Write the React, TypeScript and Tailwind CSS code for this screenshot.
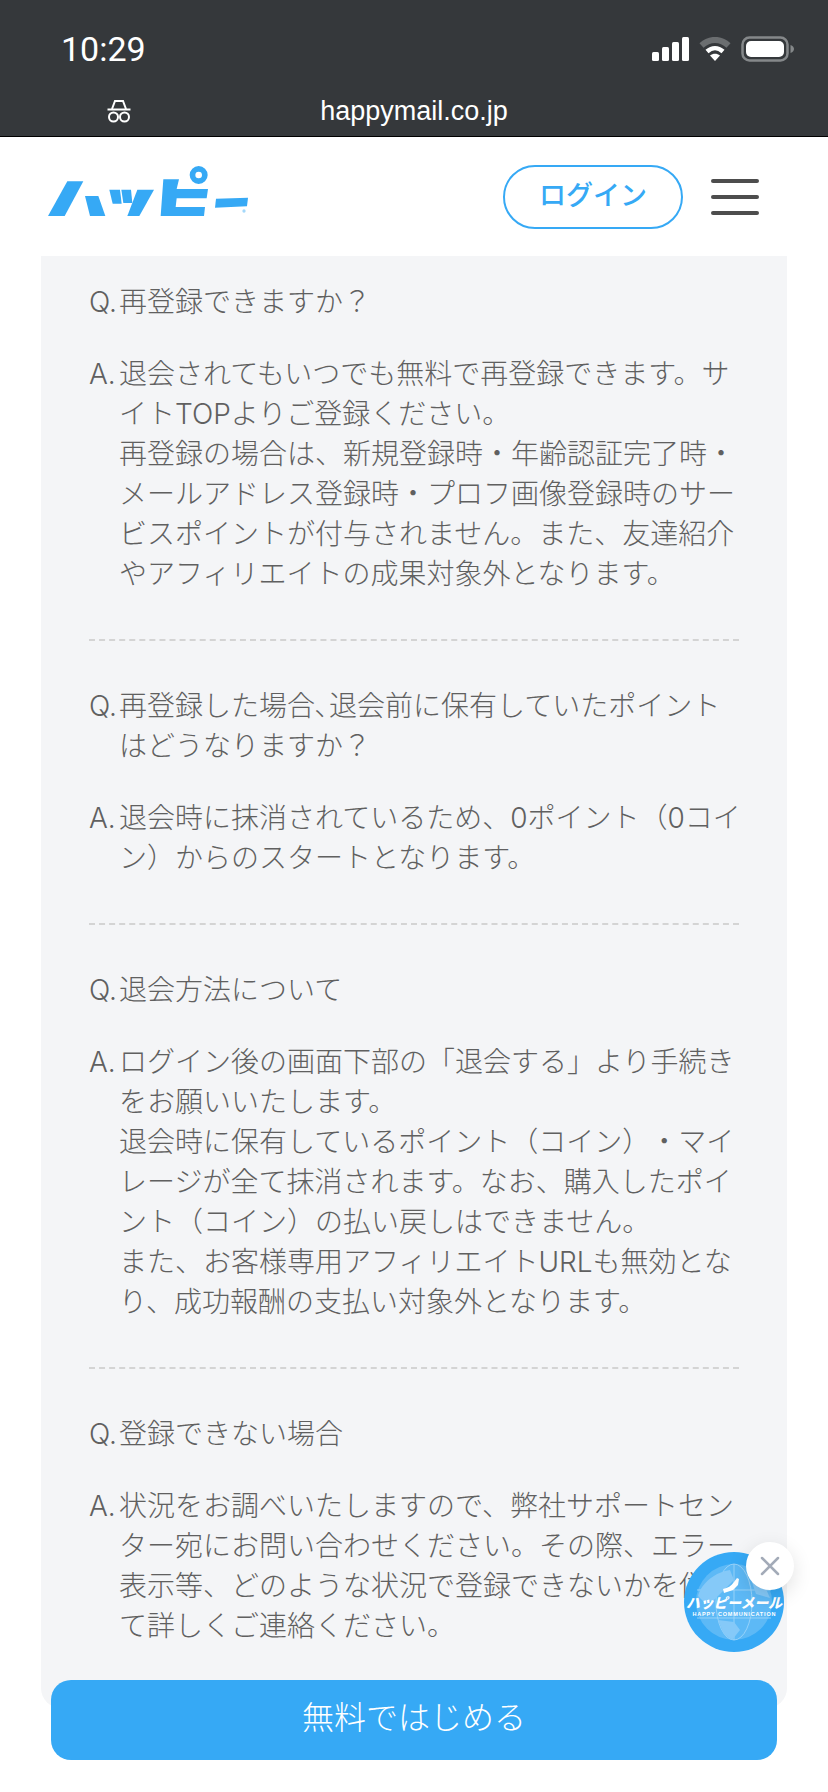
const sans = "font-['Liberation_Sans','Noto_Sans_CJK_JP',sans-serif]";

const faqs = [
  {
    q: ["再登録できますか？"],
    a: [
      "退会されてもいつでも無料で再登録できます。サイトTOPよりご登録ください。",
      "再登録の場合は、新規登録時・年齢認証完了時・メールアドレス登録時・プロフ画像登録時のサービスポイントが付与されません。また、友達紹介やアフィリエイトの成果対象外となります。",
    ],
  },
  {
    q: ["再登録した場合､退会前に保有していたポイントはどうなりますか？"],
    a: ["退会時に抹消されているため、0ポイント（0コイン）からのスタートとなります。"],
  },
  {
    q: ["退会方法について"],
    a: [
      "ログイン後の画面下部の「退会する」より手続きをお願いいたします。",
      "退会時に保有しているポイント（コイン）・マイレージが全て抹消されます。なお、購入したポイント（コイン）の払い戻しはできません。",
      "また、お客様専用アフィリエイトURLも無効となり、成功報酬の支払い対象外となります。",
    ],
  },
  {
    q: ["登録できない場合"],
    a: ["状況をお調べいたしますので、弊社サポートセンター宛にお問い合わせください。その際、エラー表示等、どのような状況で登録できないかを併せて詳しくご連絡ください。"],
  },
];

function Logo() {
  return (
    <svg width="200" height="60" viewBox="0 -12 600 180" fill="#36a9f5">
      <path d="M0 141 58 37h48L50 141z" />
      <path d="M111 81h40l21 60h-46z" />
      <path d="M184 62h32l5 42h-27z" />
      <path d="M220 62h29l4 40h-27z" />
      <path d="M268 62h50l-44 79h-36z" />
      <path d="M346 31h47l-7 29h94l-4 28h-90l-3 26h88l-3 27H338z" />
      <path fillRule="evenodd" d="M452-9a27 27 0 1 1 0 54 27 27 0 0 1 0-54zm0 17a10 10 0 1 0 0 20 10 10 0 0 0 0-20z" />
      <path d="M504 89l96-3-3 26-96 4z" />
      <circle cx="588" cy="126" r="5" opacity="0.45" />
    </svg>
  );
}

function Signal() {
  return (
    <svg width="37" height="24" viewBox="0 0 37 24" fill="#fff">
      <rect x="0" y="15" width="7" height="9" rx="1.5" />
      <rect x="10" y="10" width="7" height="14" rx="1.5" />
      <rect x="20" y="5" width="7" height="19" rx="1.5" />
      <rect x="30" y="0" width="7" height="24" rx="1.5" />
    </svg>
  );
}

function Wifi() {
  return (
    <svg width="32" height="24" viewBox="0 0 32 24" fill="none">
      <path d="M2.500 8.500c8-7.500 19-7.500 27 0" stroke="#6b6e70" strokeWidth="6" />
      <path d="M8 14.500c5-4.500 11-4.500 16 0" stroke="#fff" strokeWidth="4.500" />
      <path d="M16 24l-5-5.500c3-2.500 7-2.500 10 0z" fill="#fff" />
    </svg>
  );
}

function Battery() {
  return (
    <svg width="54" height="26" viewBox="0 0 54 26" fill="none">
      <rect x="1.500" y="1.500" width="45" height="23" rx="7" stroke="#85888a" strokeWidth="2.500" />
      <rect x="5" y="5" width="38" height="16" rx="5" fill="#fff" />
      <path d="M49.500 9c2.500 1 3.500 2.500 3.500 4s-1 3-3.500 4z" fill="#85888a" />
    </svg>
  );
}

function Incognito() {
  return (
    <svg width="24" height="24" viewBox="0 0 24 24" fill="none" stroke="#fff" strokeWidth="2">
      <path d="M5 10 8 2h8l3 8" />
      <path d="M0.500 10.500h23" />
      <circle cx="6.500" cy="18" r="4.500" />
      <circle cx="17.500" cy="18" r="4.500" />
    </svg>
  );
}

function Globe() {
  return (
    <svg width="100" height="100" viewBox="0 0 100 100">
      <circle cx="50" cy="50" r="50" fill="#36a9f5" />
      <circle cx="50" cy="50" r="38" fill="#5db9f6" />
      <g fill="none" stroke="#a5d8fa" strokeWidth="0.800">
        <ellipse cx="50" cy="50" rx="18" ry="38" />
        <path d="M50 12v76M13 38h74M13 66h74" />
      </g>
      <path d="M14 44c4-14 18-24 32-26l4 10-12 12-8 8-10 2zM34 68l16 2 6 8-8 10-8-6zM66 20l12 8 8 18-14-4-4-12z" fill="#85c9f8" />
      <path d="M39 37c5-1 8-3 11-7l3-4 2 1-1 6-5 5-9 3z" fill="#fff" />
      <text x="50" y="56" textAnchor="middle" fill="#fff" fontSize="14" fontWeight="900" fontStyle="italic" fontFamily="'Noto Sans CJK JP', sans-serif" textLength="96" lengthAdjust="spacingAndGlyphs">ハッピーメール</text>
      <text x="50" y="64" textAnchor="middle" fill="#fff" fontSize="5.500" fontWeight="700" fontFamily="'Liberation Sans', sans-serif" textLength="83" lengthAdjust="spacing">HAPPY COMMUNICATION</text>
    </svg>
  );
}

export default function App() {
  return (
    <div className={`relative flex h-[1792px] flex-col overflow-hidden bg-white ${sans}`}>
      <div className="h-[137px] shrink-0 border-b border-black bg-[#35383b] text-white">
        <div className="flex h-[98px] items-center justify-between pr-[33px] pl-[61px]">
          <span className="font-['Roboto'] text-[34px] font-normal">10:29</span>
          <div className="flex items-center gap-[10px]">
            <Signal />
            <Wifi />
            <Battery />
          </div>
        </div>
        <div className="relative flex items-center justify-center text-[27px] leading-[26px]">
          <span className="absolute left-[107px]">
            <Incognito />
          </span>
          happymail.co.jp
        </div>
      </div>

      <header className="flex h-[119px] shrink-0 items-center justify-between pr-[69px] pl-[48px]">
        <div className="-mt-[4px]">
          <Logo />
        </div>
        <div className="flex items-center gap-[28px]">
          <div className="flex h-[64px] w-[180px] items-center justify-center rounded-full border-2 border-[#36a9f5] text-[27px] font-medium text-[#36a9f5]">
            ログイン
          </div>
          <div className="flex w-[48px] flex-col gap-[12px]">
            <span className="h-[4px] rounded-full bg-[#4d4d4d]" />
            <span className="h-[4px] rounded-full bg-[#4d4d4d]" />
            <span className="h-[4px] rounded-full bg-[#4d4d4d]" />
          </div>
        </div>
      </header>

      <main className="mx-[41px] rounded-b-[20px] bg-[#f4f5f7] px-[48px] pt-[26px] pb-[62px] font-['Inter','Noto_Sans_CJK_JP',sans-serif] text-[28px] leading-[40px] font-light text-[#606060] [text-spacing-trim:space-all]">
        {faqs.map((item, i) => (
          <section key={i} className={i > 0 ? "mt-[45px] border-t-2 border-dashed border-[#d4d4d4] pt-[45px]" : ""}>
            <div className="flex">
              <span className="w-[30px] shrink-0">Q.</span>
              <p>{item.q}</p>
            </div>
            <div className="mt-[32px] flex">
              <span className="w-[30px] shrink-0">A.</span>
              <div className="-mr-[4px] min-w-0 flex-1">
                {item.a.map((line, j) => (
                  <p key={j}>{line}</p>
                ))}
              </div>
            </div>
          </section>
        ))}
      </main>

      <div className="absolute top-[1552px] left-[684px] h-[100px] w-[100px]">
        <Globe />
        <div className="absolute -top-[10px] -right-[10px] flex h-[48px] w-[48px] items-center justify-center rounded-full bg-white shadow-[0_6px_20px_rgba(0,0,0,0.12)]">
          <svg width="20" height="20" viewBox="0 0 20 20" stroke="#a3abb8" strokeWidth="2.500" strokeLinecap="round">
            <path d="M2 2l16 16M18 2 2 18" />
          </svg>
        </div>
      </div>

      <div className="absolute top-[1680px] left-[51px] flex h-[80px] w-[726px] items-center justify-center rounded-[20px] bg-[#36a9f5] pb-[4px] text-[32px] font-light text-white">
        無料ではじめる
      </div>
    </div>
  );
}
